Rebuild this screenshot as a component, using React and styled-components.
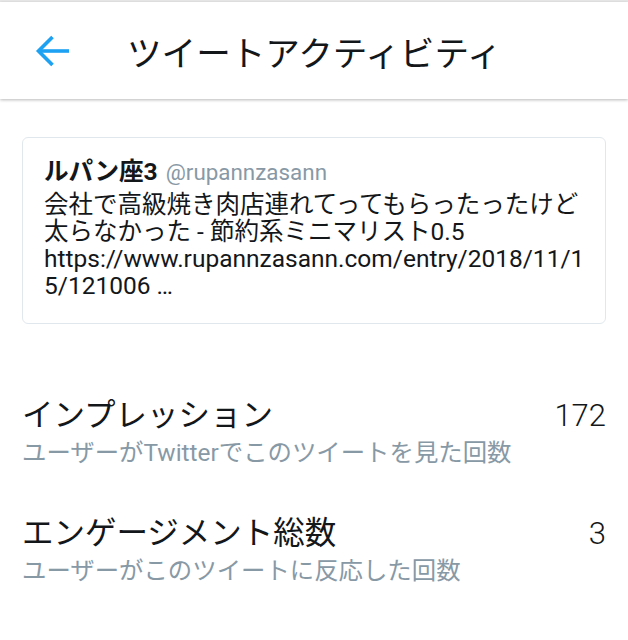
import React from "react";
import styled, { createGlobalStyle } from "styled-components";

const GlobalStyle = createGlobalStyle`
  body {
    margin: 0;
    background: #ffffff;
    font-family: Roboto, "Noto Sans CJK JP", sans-serif;
  }
`;

const StyledPage = styled.div`
  display: flex;
  flex-flow: column nowrap;
  width: 628px;
  min-height: 640px;
  border-top: 2px solid #e8e8e8;
  box-sizing: border-box;
`;

const StyledHeader = styled.header`
  display: flex;
  align-items: center;
  height: 97px;
  padding-left: 35px;
  gap: 58px;
  background: #ffffff;
  box-shadow: 0 1px 3px rgba(0, 0, 0, 0.28);
`;

const StyledTitle = styled.h1`
  margin: 0;
  font-size: 34.6px;
  font-weight: 400;
  color: #14171a;
`;

const StyledBack = styled.button`
  display: flex;
  padding: 0;
  border: none;
  background: none;
  color: #1da1f2;
`;

const StyledCard = styled.article`
  margin: 38px 22px 0;
  height: 187px;
  box-sizing: border-box;
  padding: 19px 18px 0 21px;
  border: 1px solid #e1e8ed;
  border-radius: 6px;
`;

const StyledAuthor = styled.div`
  display: flex;
  align-items: baseline;
  gap: 8px;
  line-height: 30px;
`;

const StyledName = styled.span`
  font-size: 24.6px;
  font-weight: 700;
  color: #14171a;
`;

const StyledHandle = styled.span`
  font-size: 22.4px;
  color: #8899a6;
`;

const StyledTweet = styled.p`
  margin: 4px 0 0;
  font-size: 24.5px;
  line-height: 27px;
  color: #14171a;
  word-break: break-all;
`;

const StyledLink = styled.span`
  display: block;
`;

const StyledStats = styled.section`
  display: flex;
  flex-flow: column nowrap;
  gap: 45px;
  padding: 73px 22px 0;
`;

const StyledStat = styled.div`
  display: grid;
  grid-template-columns: 1fr auto;
  row-gap: 1px;
`;

const StyledLabel = styled.span`
  font-size: 31.5px;
  line-height: 38px;
  color: #14171a;
`;

const StyledValue = styled.span`
  font-family: Roboto, sans-serif;
  font-size: 31px;
  font-weight: 300;
  line-height: 38px;
  color: #14171a;
`;

const StyledNote = styled.span`
  grid-column: 1 / -1;
  font-size: 24.4px;
  line-height: 34px;
  color: #8899a6;
`;

const STATS = [
  { label: "インプレッション", value: "172", note: "ユーザーがTwitterでこのツイートを見た回数" },
  { label: "エンゲージメント総数", value: "3", note: "ユーザーがこのツイートに反応した回数" },
];

function BackArrow() {
  return (
    <svg width="34" height="34" viewBox="0 0 34 34" fill="none" stroke="currentColor" strokeWidth="3.6" strokeLinecap="butt">
      <path d="M3.5 17H34" />
      <path d="M17.5 3L3.5 17l14 14" />
    </svg>
  );
}

function App() {
  return (
    <>
      <GlobalStyle />
      <StyledPage>
        <StyledHeader>
          <StyledBack aria-label="戻る">
            <BackArrow />
          </StyledBack>
          <StyledTitle>ツイートアクティビティ</StyledTitle>
        </StyledHeader>
        <StyledCard>
          <StyledAuthor>
            <StyledName>ルパン座3</StyledName>
            <StyledHandle>@rupannzasann</StyledHandle>
          </StyledAuthor>
          <StyledTweet>
            会社で高級焼き肉店連れてってもらったったけど太らなかった - 節約系ミニマリスト0.5
            <StyledLink>https://www.rupannzasann.com/entry/2018/11/15/121006 …</StyledLink>
          </StyledTweet>
        </StyledCard>
        <StyledStats>
          {STATS.map((s) => (
            <StyledStat key={s.label}>
              <StyledLabel>{s.label}</StyledLabel>
              <StyledValue>{s.value}</StyledValue>
              <StyledNote>{s.note}</StyledNote>
            </StyledStat>
          ))}
        </StyledStats>
      </StyledPage>
    </>
  );
}

export default App;
